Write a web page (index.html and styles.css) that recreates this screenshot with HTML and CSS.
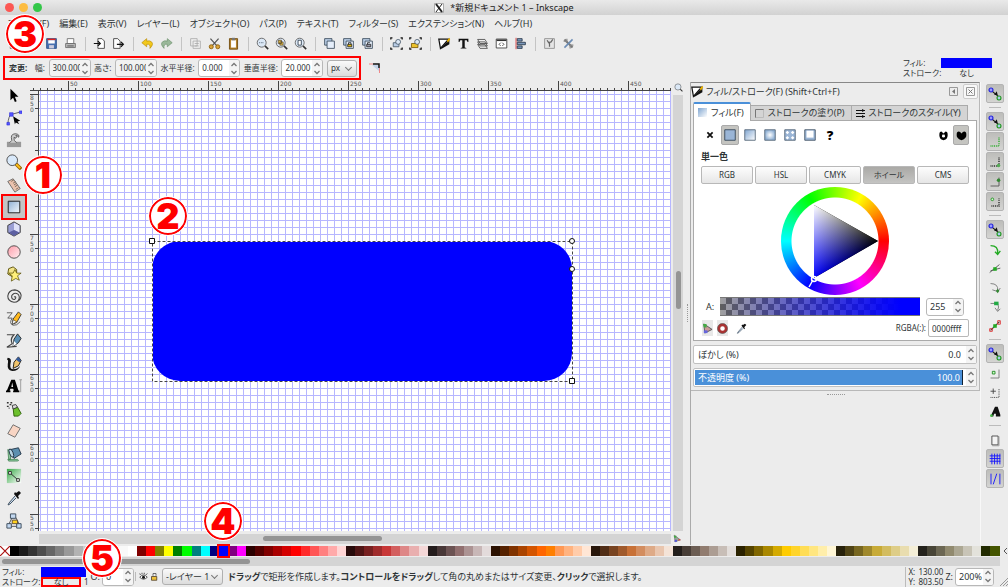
FILE: index.html
```html
<!DOCTYPE html>
<html lang="ja">
<head>
  <meta charset="UTF-8">
  <meta name="viewport" content="width=device-width, initial-scale=1.0">
  <title>*新規ドキュメント 1 - Inkscape</title>
  <link rel="stylesheet" href="styles.css">
</head>
<body>

  <!-- shared icons -->
  <svg class="defs" width="0" height="0" aria-hidden="true">
    <defs>
      <linearGradient id="gBlue" x1="0" y1="0" x2="1" y2="1"><stop offset="0" stop-color="#7fa5d0"/><stop offset="1" stop-color="#fff"/></linearGradient>
      <linearGradient id="gRect" x1="0" y1="0" x2="1" y2="1"><stop offset="0" stop-color="#8fb0d4"/><stop offset="1" stop-color="#f4f8fc"/></linearGradient>
      <linearGradient id="gPink" x1="0" y1="0" x2="1" y2="1"><stop offset="0" stop-color="#ff9aa8"/><stop offset="1" stop-color="#fff0f2"/></linearGradient>
      <linearGradient id="gGreen" x1="0" y1="0" x2="1" y2="1"><stop offset="0" stop-color="#35a845"/><stop offset="1" stop-color="#fff"/></linearGradient>
      <radialGradient id="gRadial"><stop offset="0" stop-color="#fff"/><stop offset="1" stop-color="#8fb0d4"/></radialGradient>
      <linearGradient id="gShade" gradientUnits="userSpaceOnUse" x1="33" y1="0" x2="97" y2="0"><stop offset="0" stop-color="#00f"/><stop offset="1" stop-color="#000"/></linearGradient>
      <linearGradient id="gLight" gradientUnits="userSpaceOnUse" x1="33" y1="18" x2="65" y2="73"><stop offset="0" stop-color="#ff0"/><stop offset="1" stop-color="#000"/></linearGradient>
      <symbol id="up" viewBox="0 0 8 5"><path d="M1.5 4 4 1.500 6.500 4" fill="none" stroke="currentColor" stroke-width="1.300"/></symbol>
      <symbol id="down" viewBox="0 0 8 5"><path d="M1.500 1 4 3.500 6.500 1" fill="none" stroke="currentColor" stroke-width="1.300"/></symbol>
      <symbol id="brush" viewBox="0 0 16 16"><path d="M1 2.500h12L3 14z" fill="#fff" stroke="#111" stroke-width="1.500"/><path d="M14 3v6L5 14l-3 1z" fill="#111"/><path d="m11 4 3-3 1 2-3 4z" fill="#e8b000"/></symbol>
      <symbol id="picker" viewBox="0 0 16 16"><path d="M9 6 3 13l-1 2 2-1 6-6" fill="#cde" stroke="#456" /><path d="m8 4 4 5 1-1-1-2 3-3-2-2-3 2-1-1z" fill="#111"/></symbol>
      <symbol id="mag" viewBox="0 0 16 16"><path d="m11 11 4 4" stroke="#333" stroke-width="2"/><circle cx="7" cy="7" r="5.500" fill="#dbe8f6" stroke="#555"/></symbol>
      <symbol id="snap" viewBox="0 0 18 18"><path d="m6 6 7 6" stroke="#111" stroke-width="1.200"/><path d="m8 10 4 0-1-4z" fill="#111"/><circle cx="4.500" cy="4.500" r="2.200" fill="#99f" stroke="#22d" stroke-width="1.300"/><circle cx="13.500" cy="13.500" r="2.200" fill="#ace" stroke="#292" stroke-width="1.300"/></symbol>
      <symbol id="copies" viewBox="0 0 16 16"><path d="M2 2h9v8H2z" fill="#b9cde6" stroke="#345"/><path d="M5 5h9v9H5z" fill="#e5eefa" stroke="#345"/></symbol>
    </defs>
  </svg>

  <header class="titlebar">
    <div class="lights"><i class="red"></i><i class="yellow"></i><i class="green"></i></div>
    <span class="title"><svg width="10" height="10" viewBox="0 0 10 10"><path d="M.5.5h9v9h-9z" fill="#fff" stroke="#aaa"/><path d="m2 1 6 8" stroke="#222" stroke-width="2"/><path d="M8 1 2 9" stroke="#222"/></svg>*新規ドキュメント 1 – Inkscape</span>
  </header>

  <nav class="menubar">
    <button>ファイル(F)</button>
    <button>編集(E)</button>
    <button>表示(V)</button>
    <button>レイヤー(L)</button>
    <button>オブジェクト(O)</button>
    <button>パス(P)</button>
    <button>テキスト(T)</button>
    <button>フィルター(S)</button>
    <button>エクステンション(N)</button>
    <button>ヘルプ(H)</button>
  </nav>

  <div class="commands">
    <button aria-label="新規"><svg viewBox="0 0 16 16"><path d="M4 2h8v12H4z" fill="#fff" stroke="#555"/></svg></button>
    <button aria-label="開く"><svg viewBox="0 0 16 16"><path d="M2 5h5l1 2h6v7H2z" fill="#ddd" stroke="#555"/></svg></button>
    <button aria-label="保存"><svg viewBox="0 0 16 16"><path d="M2 2h12v12H2z" fill="#4670b0" stroke="#234a86"/><path d="M3 2h10v2H3z" fill="#d22"/><path d="M4 4h8v4H4z" fill="#fff"/><path d="M5 10h6v4H5z" fill="#ccd"/></svg></button>
    <button aria-label="印刷"><svg viewBox="0 0 16 16"><path d="M4 2h8v6H4z" fill="#fff" stroke="#666"/><path d="M2 8h12v5H2z" fill="#bbb" stroke="#666"/><path d="M4 11h8" stroke="#444"/></svg></button>
    <span class="sep"></span>
    <button aria-label="インポート"><svg viewBox="0 0 16 16"><path d="M6 2h5l3 3v9H6z" fill="#fff" stroke="#333"/><path d="M1 8h7M6 5l3 3-3 3" fill="none" stroke="#111" stroke-width="1.500"/></svg></button>
    <button aria-label="エクスポート"><svg viewBox="0 0 16 16"><path d="M2 2h5l3 3v9H2z" fill="#fff" stroke="#333"/><path d="M6 9h8m-3-3 3 3-3 3" fill="none" stroke="#111" stroke-width="1.500"/></svg></button>
    <span class="sep"></span>
    <button aria-label="元に戻す"><svg viewBox="0 0 16 16"><path d="m7 2-6 5 6 5V9q5-1 4 5 5-5 2-8-2-2-6-1z" fill="#f2c81c" stroke="#b88a00" stroke-width=".8"/></svg></button>
    <button aria-label="やり直し"><svg viewBox="0 0 16 16"><path d="m9 2 6 5-6 5V9Q4 8 5 14 0 9 3 6q2-2 6-1z" fill="#9ab89a" stroke="#6a906a" stroke-width=".8"/></svg></button>
    <span class="sep"></span>
    <button aria-label="コピー"><svg viewBox="0 0 16 16"><path d="M2 2h8v9H2zM5 5h9v9H5z" fill="#eee" stroke="#aaa"/><path d="M7 8h5m-5 3h5" stroke="#aaa"/></svg></button>
    <button aria-label="切り取り"><svg viewBox="0 0 16 16"><path d="m3 2 8 9m2-9-8 9" stroke="#555" stroke-width="1.500"/><circle cx="4" cy="12" r="2.500" fill="#d9a33a" stroke="#8a5a00"/><circle cx="12" cy="12" r="2.500" fill="#d9a33a" stroke="#8a5a00"/></svg></button>
    <button aria-label="貼り付け"><svg viewBox="0 0 16 16"><path d="M3 2h10v13H3z" fill="#b5832c" stroke="#6a4200"/><path d="M5 4h6v9H5z" fill="#fff"/><path d="M6 1h4v3H6z" fill="#777"/></svg></button>
    <span class="sep"></span>
    <button aria-label="選択ズーム"><svg viewBox="0 0 16 16"><use href="#mag"/><path d="M4 7h6" stroke="#345" stroke-dasharray="1 1"/></svg></button>
    <button aria-label="描画ズーム"><svg viewBox="0 0 16 16"><use href="#mag"/><path d="M4 4h4v4H4zM6 6h4v4H6z" fill="#e6c34a" stroke="#432" stroke-width=".8"/></svg></button>
    <button aria-label="ページズーム"><svg viewBox="0 0 16 16"><use href="#mag"/><path d="M5 4h4v6H5z" fill="#fff" stroke="#234"/></svg></button>
    <span class="sep"></span>
    <button aria-label="複製"><svg viewBox="0 0 16 16"><use href="#copies"/></svg></button>
    <button aria-label="クローン"><svg viewBox="0 0 16 16"><use href="#copies"/><path d="M7 9h5v3H7z" fill="#e6b800" stroke="#222"/><path d="M8 9V7h3v2" fill="none" stroke="#222"/></svg></button>
    <button aria-label="クローン解除"><svg viewBox="0 0 16 16"><use href="#copies"/><path d="M7 9h5v3H7z" fill="#99a" stroke="#222"/><path d="M8 9V7h3" fill="none" stroke="#222"/></svg></button>
    <span class="sep"></span>
    <button aria-label="グループ化"><svg viewBox="0 0 16 16"><path d="M4 7h7v5H4z" fill="#b9cde6" stroke="#456"/><circle cx="10" cy="6" r="3" fill="#dce8f6" stroke="#456"/><path d="M1 3V1h2M13 1h2v2M1 13v2h2m10 0h2v-2" fill="none" stroke="#111" stroke-width="1.500"/></svg></button>
    <button aria-label="グループ解除"><svg viewBox="0 0 16 16"><path d="M3 8h8v5H3z" fill="#ebc22d" stroke="#765500"/><circle cx="10" cy="6" r="3" fill="#dce8f6" stroke="#456"/><path d="M1 3V1h2M13 1h2v2M1 13v2h2m10 0h2v-2" fill="none" stroke="#111" stroke-width="1.500"/></svg></button>
    <span class="sep"></span>
    <button aria-label="フィル/ストローク"><svg viewBox="0 0 16 16"><use href="#brush"/></svg></button>
    <button aria-label="テキスト"><svg viewBox="0 0 16 16"><path d="M2 2h12v4h-1l-1-2H9.500v9l2 .5V14h-7v-.5l2-.5V4H4L3 6H2z" fill="#111"/></svg></button>
    <button aria-label="レイヤー"><svg viewBox="0 0 16 16"><path d="M2 9h9l3 5H5zM2 6h9l3 5H5zM2 3h9l3 5H5z" fill="#eee" stroke="#444"/></svg></button>
    <button aria-label="XML"><svg viewBox="0 0 16 16"><path d="M1.500 2.500h13v11h-13z" fill="#fff" stroke="#333"/><path d="M2 4h12" stroke="#333" stroke-width="2"/><path d="M7 7 5 9l2 2m2-4 2 2-2 2" fill="none" stroke="#333"/></svg></button>
    <button aria-label="整列"><svg viewBox="0 0 16 16"><path d="M2.500 1v14" stroke="#d22"/><path d="M4 2h6v3H4zM4 6.500h10v3H4zM4 11h6v3H4z" fill="#7d99bd" stroke="#234"/></svg></button>
    <span class="sep"></span>
    <button aria-label="設定"><svg viewBox="0 0 16 16"><path d="M2 2h12v12H2z" fill="#e5e5e5" stroke="#888"/><path d="m5 4 2 3 3-1 2-3m-4 4v5" fill="none" stroke="#666" stroke-width="1.500"/></svg></button>
    <button aria-label="ドキュメント設定"><svg viewBox="0 0 16 16"><path d="m3 3 10 10" stroke="#777" stroke-width="2.500"/><path d="M13 3 3 13" stroke="#6b8cb5" stroke-width="2"/><path d="M2 5h4V2m4 12v-4h4" fill="none" stroke="#888" stroke-width="1.500"/></svg></button>
  </div>

  <div class="options">
    <div class="options-marked">
      <b class="mode">変更:</b>
      <label for="w">幅:</label>
      <span class="spin"><input id="w" value="300.000"><span class="arrows"><button aria-label="増"><svg><use href="#up"/></svg></button><button aria-label="減"><svg><use href="#down"/></svg></button></span></span>
      <label for="h">高さ:</label>
      <span class="spin"><input id="h" value="100.000"><span class="arrows"><button aria-label="増"><svg><use href="#up"/></svg></button><button aria-label="減"><svg><use href="#down"/></svg></button></span></span>
      <label for="rx">水平半径:</label>
      <span class="spin white"><input id="rx" value="0.000"><span class="arrows"><button aria-label="増"><svg><use href="#up"/></svg></button><button aria-label="減"><svg><use href="#down"/></svg></button></span></span>
      <label for="ry">垂直半径:</label>
      <span class="spin white"><input id="ry" value="20.000"><span class="arrows"><button aria-label="増"><svg><use href="#up"/></svg></button><button aria-label="減"><svg><use href="#down"/></svg></button></span></span>
      <span class="drop"><select aria-label="単位"><option>px</option></select></span>
    </div>
    <button class="corner" aria-label="角を尖らせる"><svg width="12" height="10" viewBox="0 0 12 10"><path d="M3 2h7v6z" fill="#c3d3e8"/><path d="M0 1h4" stroke="#e88"/><path d="M4 1h6v4" fill="none" stroke="#111" stroke-width="1.500"/><path d="M10.500 5v5" stroke="#e88"/></svg></button>
    <dl class="style-now">
      <dt>フィル:</dt><dd class="chip"></dd>
      <dt>ストローク:</dt><dd>なし</dd>
    </dl>
  </div>

  <main class="work">
    <div class="toolbox">
      <button aria-label="選択"><svg viewBox="0 0 18 18"><path d="m5 2 9 9-4 0 2 5-2 1-2-5-3 3z" fill="#000"/></svg></button>
      <button aria-label="ノード"><svg viewBox="0 0 18 18"><path d="M2 16Q3 6 6 5l11-3" fill="none" stroke="#555"/><path d="M4 3h4v4H4zM15 1h3v3h-3zM1 14h3v3H1z" fill="#55f" stroke="#22d" stroke-width=".6"/><path d="m8 7 8 5-3 1 2 3-4-2-1 2z" fill="#000"/></svg></button>
      <button aria-label="微調整"><svg viewBox="0 0 18 18"><path d="M1 11h16v6H1z" fill="#999"/><path d="M4 12q4-2 2-6 0-4 5-4 5 1 3 4-1-3-3-2 2 1 0 3l-2-1q-1 4 3 6" fill="#ccc" stroke="#555"/></svg></button>
      <button aria-label="ズーム"><svg viewBox="0 0 18 18"><path d="m11 11 6 6" stroke="#9a6400" stroke-width="4"/><path d="m11 11 5 5" stroke="#ffc21c" stroke-width="2"/><circle cx="7" cy="7" r="6" fill="#d9e9fa" stroke="#444"/></svg></button>
      <button aria-label="測定"><svg viewBox="0 0 18 18"><path d="m2 5 6-3 8 11-6 4z" fill="#ecc3ae" stroke="#666"/><path d="m9 3-3 2m5 0-3 2m4 0-3 2m4 0-3 2m4 1-3 2" stroke="#765"/></svg></button>
      <button class="on" aria-label="矩形"><svg viewBox="0 0 18 18"><path d="M2.500 2.500h13v13h-13z" fill="url(#gRect)" stroke="#111"/></svg></button>
      <button aria-label="3D ボックス"><svg viewBox="0 0 18 18"><path d="m2 5 7-4 7 4v8l-7 4-7-4z" fill="#9a9ed4" stroke="#333"/><path d="m9 2 6 3v8l-6-3z" fill="#dfe1f8"/><path d="m3 13 6-3 6 3-6 4z" fill="#5c5fa2"/></svg></button>
      <button aria-label="円/弧"><svg viewBox="0 0 18 18"><circle cx="9" cy="9" r="7" fill="url(#gPink)" stroke="#444"/></svg></button>
      <button aria-label="星形"><svg viewBox="0 0 18 18"><path d="M3 3 8 1l4 3 0 5-5 3-5-3z" fill="#f3e48a" stroke="#554a00"/><path d="m10 4 2 4 5 0-4 3 2 5-4-2-5 3 1-6-4-3 5 0z" fill="#fff07a" stroke="#554a00" stroke-width=".8"/></svg></button>
      <button aria-label="らせん"><svg viewBox="0 0 18 18"><path d="M9 9q2-1 2 1-1 3-4 1-2-4 2-6 5-1 6 4 0 6-6 6-7-1-7-7 1-7 8-7 6 1 7 6 0 3-2 6" fill="none" stroke="#444" stroke-width="1.200"/></svg></button>
      <button aria-label="鉛筆"><svg viewBox="0 0 18 18"><path d="M1 2h6L2 8h5q-4 6 1 8 4 1 8-4" fill="none" stroke="#555"/><path d="m14 1 3 3-5 9-5 2 1-6z" fill="#ffb81c" stroke="#333"/><path d="m8 10 4 2-5 3z" fill="#fff" stroke="#333" stroke-width=".6"/></svg></button>
      <button aria-label="ペン"><svg viewBox="0 0 18 18"><path d="M1 2h8Q4 7 7 12l-6 4 11-1" fill="none" stroke="#444" stroke-width="1.300"/><path d="m13 1 4 5-3 5-6 4 1-8z" fill="#5a8fb4" stroke="#222"/><path d="m9 9 3 3-4 3z" fill="#fff"/></svg></button>
      <button aria-label="カリグラフィ"><svg viewBox="0 0 18 18"><path d="M2 2q5 0 3 7-1 6 3 6 5 0 8-4-2 6-9 6-6-1-5-8 1-5-1-5z" fill="#111"/><path d="m14 1 3 4-3 6-6 3 1-7z" fill="#f1c46c" stroke="#111"/><path d="m14 1 3 4-2 2-4-3z" fill="#345a9a"/></svg></button>
      <button aria-label="テキスト"><svg viewBox="0 0 18 18"><path d="m6 2 4 0 4 12h1v2H8v-2h1l-1-2H5l-1 2h1v2H0v-2h1zM7 5l-1 5h2z" fill="#000" fill-rule="evenodd"/><path d="M15 2h3m-1.500 0v14" stroke="#999"/></svg></button>
      <button aria-label="スプレー"><svg viewBox="0 0 18 18"><path d="m8 8 5-1 4 7-3 3H9z" fill="#6cc02c" stroke="#285a00"/><path d="m7 5 4-1 2 3-5 2z" fill="#ddd" stroke="#333"/><path d="M1 2h2m1 2h2M1 6h2m2-4h2M3 8h1" stroke="#333" stroke-width="1.500"/></svg></button>
      <button aria-label="消しゴム"><svg viewBox="0 0 18 18"><path d="m8 2 8 4-6 10-8-4z" fill="#f8d5c4" stroke="#666"/></svg></button>
      <button aria-label="バケツ"><svg viewBox="0 0 18 18"><path d="M2 15h11q3 2-2 2H3zM2 4q4 0 3 11H3z" fill="#8ac79a" stroke="#3a7a4a" stroke-width=".8"/><path d="m5 4 9-2 3 7-8 5z" fill="#5c8fb0" stroke="#234"/><ellipse cx="6" cy="8" rx="2" ry="5" fill="#b5d3e3" stroke="#234" transform="rotate(-22 6 8)"/></svg></button>
      <button aria-label="グラデーション"><svg viewBox="0 0 18 18"><path d="M1 1h16v16H1z" fill="url(#gGreen)"/><path d="m5 6 8 7" stroke="#222"/><path d="M3 4h3v3H3zM12 12h3v3h-3z" fill="#fff" stroke="#222"/></svg></button>
      <button aria-label="スポイト"><svg viewBox="0 0 16 16"><use href="#picker"/></svg></button>
      <button aria-label="コネクタ"><svg viewBox="0 0 18 18"><path d="m7 5-4 8m8-8 4 8M6 15h6" stroke="#444"/><path d="M5 1h6v5H5zM1 12h5v5H1zM12 12h5v5h-5z" fill="#c3d8f0" stroke="#345"/><path d="M7 8h6v4H7z" fill="#ffd21c" stroke="#543"/></svg></button>
    </div>

    <section class="editor">
      <div class="ruler-h" id="rulerH"></div>
      <svg class="corner-zoom" viewBox="0 0 16 16"><use href="#mag"/></svg>
      <div class="ruler-v" id="rulerV"></div>
      <div class="canvas">
        <svg class="drawing" width="434" height="152" viewBox="0 0 434 152">
          <rect x="6" y="6" width="420" height="140" rx="28" fill="#00f"/>
          <rect x="6.500" y="6.500" width="420" height="140" fill="none" stroke="#fff"/>
          <rect x="6.500" y="6.500" width="420" height="140" fill="none" stroke="#444" stroke-dasharray="3 2"/>
          <g fill="#fff" stroke="#111">
            <path d="M3.500 3.500h5v5h-5zM423.500 143.500h5v5h-5z"/>
            <circle cx="426" cy="6" r="2.500"/><circle cx="426" cy="34" r="2.500"/>
          </g>
        </svg>
      </div>
      <div class="scroll-v"><i></i></div>
      <div class="scroll-h"><i></i></div>
      <svg class="corner-cms" viewBox="0 0 12 12"><path d="m2 1 9 7-8 3z" fill="#9a9" stroke="#666"/><path d="M1 2h4v3H2z" fill="#4a4"/><path d="M3 8h3v3H2z" fill="#55d"/><path d="M8 7h3v2H8z" fill="#d44"/></svg>
    </section>

    <div class="handle-v"><i></i></div>

    <aside class="dock">
      <div class="dialog">
        <div class="dialog-head">
          <svg width="13" height="13"><use href="#brush"/></svg>
          <h2>フィル/ストローク(F) (Shift+Ctrl+F)</h2>
          <button aria-label="アイコン化"><svg width="9" height="9" viewBox="0 0 9 9"><path d="M.5.5h8v8h-8z" fill="none" stroke="#999"/><path d="M6 2v5L3 4.500z" fill="#777"/></svg></button>
          <button class="close" aria-label="閉じる"><svg width="9" height="9" viewBox="0 0 9 9"><path d="M.5.5h8v8h-8z" fill="none" stroke="#999"/><path d="m2.500 2.500 4 4m0-4-4 4" stroke="#777"/></svg></button>
        </div>
        <div class="tabs">
          <button class="active"><svg width="9" height="9"><path d="M0 0h9v9H0z" fill="url(#gBlue)"/></svg>フィル(F)</button>
          <button><svg width="9" height="9"><path d="M.5 9V.5H9" fill="none" stroke="#777"/><path d="M.5 8.500h8v-8" fill="none" stroke="#bbb"/></svg>ストロークの塗り(P)</button>
          <button><svg width="9" height="9"><path d="M0 1.500h9M0 4.500h9M0 7.500h9" stroke="#111"/><path d="m6 0 3 1.500L6 3m0 3 3 1.500L6 9" fill="#111"/></svg>ストロークのスタイル(Y)</button>
        </div>
        <div class="panel">
          <div class="paints">
            <button aria-label="塗りなし"><svg viewBox="0 0 16 16"><path d="m5 5 6 6m0-6-6 6" stroke="#111" stroke-width="2"/></svg></button>
            <button class="on" aria-label="単一色"><svg viewBox="0 0 16 16"><path d="M2 2h12v12H2z" fill="#9ab5d6" stroke="#345"/></svg></button>
            <button aria-label="線形"><svg viewBox="0 0 16 16"><path d="M2 2h12v12H2z" fill="url(#gBlue)" stroke="#567"/></svg></button>
            <button aria-label="放射"><svg viewBox="0 0 16 16"><path d="M2 2h12v12H2z" fill="url(#gRadial)" stroke="#567"/></svg></button>
            <button aria-label="パターン"><svg viewBox="0 0 16 16"><path d="M2 2h12v12H2z" fill="#9ab5d6" stroke="#567"/><path d="m5 3 2 2-2 2-2-2zm6 0 2 2-2 2-2-2zm-6 6 2 2-2 2-2-2zm6 0 2 2-2 2-2-2z" fill="#fff"/></svg></button>
            <button aria-label="スウォッチ"><svg viewBox="0 0 16 16"><path d="M2 2h12v12H2z" fill="#9ab5d6" stroke="#456"/><path d="M4 3h8v8H4z" fill="#fff"/></svg></button>
            <button class="ask" aria-label="未設定">?</button>
            <span class="grow"></span>
            <button class="rule" aria-label="塗り規則 交互"><svg viewBox="0 0 16 16"><path d="M8 15Q1 13 2 6q0-4 3-4l3 3 3-3q3 0 3 4 1 7-6 9zM7 6q-3 4 1 5 4-1 1-5L8 7z" fill="#000" fill-rule="evenodd"/></svg></button>
            <button class="rule on" aria-label="塗り規則 全部"><svg viewBox="0 0 16 16"><path d="M8 15Q0 12 1 6q0-4 3-4 2 0 4 3 2-3 4-3 3 0 3 4 1 6-7 9z" fill="#000"/></svg></button>
          </div>
          <h3>単一色</h3>
          <div class="modes">
            <button>RGB</button><button>HSL</button><button>CMYK</button><button class="on">ホイール</button><button>CMS</button>
          </div>
          <div class="wheel">
            <svg width="108" height="108" viewBox="0 0 108 108">
              <g class="tri"><path d="M33 18 97 54 33 91z" fill="url(#gShade)"/><path class="add" d="M33 18 97 54 33 91z" fill="url(#gLight)"/></g>
              <path d="m28 100 4-7" stroke="#fff" stroke-width="1.500"/><circle cx="33" cy="92" r="2.500" fill="none" stroke="#fff" stroke-width="1.500"/>
            </svg>
          </div>
          <div class="alpha">
            <label for="alpha">A:</label>
            <span class="alpha-bar"></span>
            <span class="spin white wide"><input id="alpha" value="255"><span class="arrows"><button aria-label="増"><svg><use href="#up"/></svg></button><button aria-label="減"><svg><use href="#down"/></svg></button></span></span>
          </div>
          <div class="rgba">
            <button class="tint" aria-label="色管理"><svg viewBox="0 0 12 12"><path d="m2 1 9 6-8 4z" fill="#c99" stroke="#555"/><path d="M1 1h4v4H2z" fill="#4a4"/><path d="M2 8h4v3H2z" fill="#66d"/></svg></button>
            <button class="tint" aria-label="色域外"><svg viewBox="0 0 12 12"><circle cx="6" cy="6" r="4" fill="#fff" stroke="#a33" stroke-width="3"/><circle cx="6" cy="6" r="5.500" fill="none" stroke="#444" stroke-width=".6"/></svg></button>
            <button class="pick" aria-label="色を拾う"><svg viewBox="0 0 16 16"><use href="#picker"/></svg></button>
            <span class="grow"></span>
            <label for="rgba">RGBA(:):</label>
            <input id="rgba" value="0000ffff">
          </div>
        </div>
        <div class="meter">
          <label class="track" for="blur">ぼかし (%)</label><input id="blur" value="0.0">
          <span class="arrows"><button aria-label="増"><svg><use href="#up"/></svg></button><button aria-label="減"><svg><use href="#down"/></svg></button></span>
        </div>
        <div class="meter full">
          <label class="track" for="opacity">不透明度 (%)</label><input id="opacity" value="100.0">
          <span class="arrows"><button aria-label="増"><svg><use href="#up"/></svg></button><button aria-label="減"><svg><use href="#down"/></svg></button></span>
        </div>
      </div>
      <div class="handle-h"></div>
    </aside>

    <div class="snapbar">
      <button class="on" aria-label="スナップ"><svg><use href="#snap"/></svg></button>
      <hr>
      <button class="on" aria-label="境界枠"><svg><use href="#snap"/></svg></button>
      <button class="on" aria-label="境界枠の辺"><svg viewBox="0 0 18 18"><path d="M4 13.500h9.500V4" fill="none" stroke="#2a2" stroke-width="1.500" stroke-dasharray="1 1"/></svg></button>
      <button class="on" aria-label="境界枠の角"><svg viewBox="0 0 18 18"><path d="M4 13.500h9.500V4" fill="none" stroke="#222" stroke-width="1.500" stroke-dasharray="1 1"/><circle cx="13" cy="13" r="2" fill="#5a5"/></svg></button>
      <button class="on" aria-label="辺の中点"><svg viewBox="0 0 18 18"><path d="M4 13.500h9.500V4" fill="none" stroke="#555"/><circle cx="13" cy="7" r="2" fill="#383"/></svg></button>
      <button class="on" aria-label="枠の中心"><svg viewBox="0 0 18 18"><path d="M5 13.500h8.500V5" fill="none" stroke="#222" stroke-width="1.500" stroke-dasharray="1 1"/><circle cx="6" cy="6" r="1.500" fill="#cfc" stroke="#282"/></svg></button>
      <hr>
      <button class="on" aria-label="ノードスナップ"><svg><use href="#snap"/></svg></button>
      <button aria-label="パス"><svg viewBox="0 0 18 18"><path d="M4 4q9 0 8 9M9 11l3 3 3-4" fill="none" stroke="#2a2" stroke-width="1.500"/></svg></button>
      <button aria-label="交差点"><svg viewBox="0 0 18 18"><path d="M3 13 14 4M4 11l11-3" stroke="#555"/><path d="M7 7h4v4H7z" fill="#2a2"/></svg></button>
      <button aria-label="シャープノード"><svg viewBox="0 0 18 18"><path d="M4 4q9 0 8 8m-6-1 6 2 3-4" fill="none" stroke="#777"/><path d="m12 10 2 2-2 3-2-3z" fill="#383"/></svg></button>
      <button aria-label="スムーズノード"><svg viewBox="0 0 18 18"><path d="M4 5h8q2 4 0 8m-3-3 3 4 3-3" fill="none" stroke="#777"/><path d="M8 3h5v4H8z" fill="#2a4"/></svg></button>
      <button aria-label="線の中点"><svg viewBox="0 0 18 18"><path d="m4 14 10-10" stroke="#333" stroke-width="1.200"/><path d="M3 12h3v3H3zM12 3h3v4h-3z" fill="none" stroke="#d33"/><path d="M7 7h4v4H7z" fill="#2a2"/></svg></button>
      <hr>
      <button class="on" aria-label="その他"><svg><use href="#snap"/></svg></button>
      <button aria-label="中心"><svg viewBox="0 0 18 18"><path d="M4 13.500h9.500V4" fill="none" stroke="#777"/><path d="M6 6h3v3H6z" fill="#cfc" stroke="#282"/></svg></button>
      <button aria-label="回転中心"><svg viewBox="0 0 18 18"><path d="M4 14h9.500V4" fill="none" stroke="#333" stroke-dasharray="1 1"/><path d="M7 4v6M4 7h6" stroke="#444"/></svg></button>
      <button aria-label="ベースライン"><svg viewBox="0 0 18 18"><path d="m9 3 3 0 3 9v2h-5v-3H8l-1 3H4z" fill="#111"/><circle cx="5" cy="13" r="1.500" fill="#4b4"/></svg></button>
      <hr>
      <button aria-label="ページ境界"><svg viewBox="0 0 18 18"><path d="M5.500 4.500h7v10h-7z" fill="#f4f4f4" stroke="#444"/><path d="M13.500 5v10.500H6" fill="none" stroke="#999"/></svg></button>
      <button class="on" aria-label="グリッド"><svg viewBox="0 0 18 18"><path d="M5.500 3v12M8.500 3v12M11.500 3v12M3 5.500h12M3 8.500h12M3 11.500h12M14.500 3v12" stroke="#11f"/></svg></button>
      <button class="on" aria-label="ガイド"><svg viewBox="0 0 18 18"><path d="M4.500 3v12M14.500 3v12M7 15l4-12" stroke="#11f"/></svg></button>
    </div>
  </main>

  <div class="palette">
    <button class="none" aria-label="なし"><svg viewBox="0 0 10 10"><path d="m0 0 10 10M10 0 0 10" stroke="#a11" stroke-width="1.200"/></svg></button>
    <div class="swatches" id="swatches"></div>
    <button class="more" aria-label="パレット"><svg width="5" height="8" viewBox="0 0 5 8"><path d="M4 1 1 4l3 3" fill="none" stroke="#555"/></svg></button>
  </div>
  <div class="palette-scroll"><i></i></div>

  <footer class="status">
    <dl class="style-now small">
      <dt>フィル:</dt><dd class="chip"></dd>
      <dt>ストローク:</dt><dd class="marked">なし</dd>
    </dl>
    <span class="stroke-width">1</span>
    <label for="op">O:</label>
    <span class="spin white op"><input id="op" value="0"><span class="arrows"><button aria-label="増"><svg><use href="#up"/></svg></button><button aria-label="減"><svg><use href="#down"/></svg></button></span></span>
    <button class="layer-btn" aria-label="表示"><svg viewBox="0 0 12 12"><path d="M1 7q5-6 10 0-5 5-10 0z" fill="#fff" stroke="#222"/><circle cx="6" cy="7" r="2" fill="#111"/><path d="m2 4-1-2m3 1V1m3 2V1m2 3 2-2" stroke="#222"/></svg></button>
    <button class="layer-btn" aria-label="ロック"><svg viewBox="0 0 12 12"><path d="M4 5V2h4v3" fill="none" stroke="#444"/><path d="M2 6h7v5H2z" fill="#ecc03a" stroke="#432"/></svg></button>
    <span class="drop layer"><select aria-label="レイヤー"><option>‐レイヤー 1</option></select></span>
    <p class="hint"><b>ドラッグ</b>で矩形を作成します。<b>コントロールをドラッグ</b>して角の丸めまたはサイズ変更、<b>クリック</b>で選択します。</p>
    <div class="coords"><span>X:</span><span>130.00</span><span>Y:</span><span>803.50</span></div>
    <label for="zoom">Z:</label>
    <span class="spin white zoom"><input id="zoom" value="200%"><span class="arrows"><button aria-label="増"><svg><use href="#up"/></svg></button><button aria-label="減"><svg><use href="#down"/></svg></button></span></span>
    <svg class="grip" viewBox="0 0 9 9"><path d="M1 9 9 1M4 9l5-5M7 9l2-2" stroke="#999"/></svg>
  </footer>

  <!-- numbered notes over the window -->
  <span class="note n1">1</span>
  <span class="note n2">2</span>
  <span class="note n3">3</span>
  <span class="note n4">4</span>
  <span class="note n5">5</span>

<script src="script.js"></script>
</body>
</html>
```
FILE: styles.css
```css
* {
  box-sizing: border-box;
}
body {
  margin: 0;
  min-height: 100vh;
  display: flex;
  flex-direction: column;
  position: relative;
  overflow: hidden;
  background: #ececec;
  color: #2e3436;
  font: 9px/12px "Noto Sans", "Noto Sans CJK JP", sans-serif;
  font-feature-settings: "palt";
}
button, input, select {
  font: inherit;
  font-feature-settings: inherit;
  color: inherit;
  margin: 0;
  padding: 0;
  border: 0;
  background: none;
}
svg {
  display: block;
  flex: none;
}
.defs {
  position: absolute;
}
h2, h3, p, dl, dd {
  margin: 0;
  font-size: 9px;
  font-weight: normal;
}
.grow {
  flex: 1;
}

/* title and menus */
.titlebar {
  height: 15px;
  display: grid;
  grid-template-columns: 1fr auto 1fr;
  align-items: center;
  background: linear-gradient(#e9e9e9, #d2d2d2);
  color: #222;
}
.lights {
  display: flex;
  gap: 5px;
  padding-left: 5px;
}
.lights i {
  width: 9px;
  height: 9px;
  border-radius: 50%;
}
.red { background: #fc5753; }
.yellow { background: #fdbc40; }
.green { background: #33c748; }
.title {
  display: flex;
  align-items: center;
  gap: 6px;
}
.menubar {
  height: 17px;
  display: flex;
  align-items: center;
  gap: 10px;
  padding-left: 8px;
}
.commands {
  height: 23px;
  display: flex;
  align-items: center;
  padding-left: 4px;
}
.commands button {
  width: 19px;
}
.commands button svg {
  width: 13px;
  height: 13px;
  margin: auto;
}
.sep {
  width: 10px;
  height: 14px;
  background: linear-gradient(#c4c4c4, #c4c4c4) center / 1px 100% no-repeat;
}

/* tool options */
.options {
  height: 26px;
  display: flex;
  align-items: flex-start;
  padding-top: 1px;
  font-size: 8px;
}
.options-marked {
  height: 24px;
  width: 358px;
  margin-left: 3px;
  border: 2px solid #f00;
  display: flex;
  align-items: center;
  justify-content: space-between;
  padding: 0 2px 0 4px;
}
.mode {
  margin-right: 4px;
}
.spin {
  display: flex;
  width: 42px;
  height: 18px;
  border: 1px solid #b8b8b8;
  border-radius: 3px;
  background: #f2f2f2;
  overflow: hidden;
}
.spin.white {
  background: #fff;
}
.spin input {
  flex: 1;
  min-width: 0;
  padding-left: 3px;
}
.arrows {
  width: 10px;
  flex: none;
  display: flex;
  flex-direction: column;
  background: #f4f4f4;
  color: #777;
}
.arrows button {
  flex: 1;
}
.arrows svg {
  width: 8px;
  height: 5px;
  margin: auto;
}
.drop {
  position: relative;
  display: flex;
}
.drop select {
  appearance: none;
  width: 30px;
  height: 17px;
  padding-left: 3px;
  border: 1px solid #b0b0b0;
  border-radius: 3px;
  background: linear-gradient(#fafafa, #dcdcdc);
}
.drop::after {
  content: "";
  position: absolute;
  right: 6px;
  top: 5px;
  width: 4px;
  height: 4px;
  border: solid #777;
  border-width: 0 1px 1px 0;
  transform: rotate(45deg);
  pointer-events: none;
}
.corner {
  margin: 7px auto 0 8px;
}
.style-now {
  display: grid;
  grid-template-columns: 38px 51px;
  grid-auto-rows: 10px;
  line-height: 10px;
  font-size: 8px;
  padding: 2px 16px 0 0;
  white-space: nowrap;
}
.style-now dd {
  text-align: center;
  font-size: 8px;
}
.style-now .chip {
  background: #00f;
}

/* work area */
.work {
  flex: 1;
  display: flex;
  min-height: 0;
}
.toolbox {
  width: 30px;
  display: flex;
  flex-direction: column;
  padding: 3px 0 13px;
}
.toolbox button {
  flex: 1;
  min-height: 18px;
  width: 24px;
  margin-left: 2px;
}
.toolbox svg {
  width: 16px;
  height: 16px;
  margin: auto;
}
.toolbox .on {
  flex: 0 0 26px;
  width: 26px;
  margin: -2px 0 -2px 1px;
  border: 2px solid #f00;
  background: #c4c4c4;
}
.editor {
  flex: 1;
  min-width: 0;
  display: grid;
  grid-template: 10px 1fr 14px / 9px 1fr 14px;
}
.ruler-h {
  grid-column: 1 / 3;
  position: relative;
  overflow: hidden;
  border-bottom: 1px solid #444;
  background: repeating-linear-gradient(90deg, #444 0 1px, transparent 1px 7px) 3px 7px / 100% 3px no-repeat;
}
.ruler-v {
  position: relative;
  overflow: hidden;
  border-right: 1px solid #444;
  background: repeating-linear-gradient(#444 0 1px, transparent 1px 14px) 5px 3px / 4px 100% no-repeat;
}
.ruler-h span, .ruler-v span {
  position: absolute;
  font: 6px/6px "DejaVu Sans", sans-serif;
  color: #555;
}
.ruler-h span {
  top: 0;
  height: 10px;
  padding-left: 1px;
  border-left: 1px solid #444;
}
.ruler-v span {
  left: 0;
  width: 9px;
  border-top: 1px solid #444;
  white-space: pre-line;
}
.corner-zoom {
  width: 9px;
  height: 9px;
  margin: 2px 0 0 3px;
}
.canvas {
  position: relative;
  overflow: hidden;
  background:
    repeating-linear-gradient(90deg, transparent 0 1px, #b6b6ff 1px 2px, transparent 2px 7px),
    repeating-linear-gradient(transparent 0 3px, #b6b6ff 3px 4px, transparent 4px 7px),
    #fff;
}
.drawing {
  position: absolute;
  left: 107px;
  top: 144px;
}
.scroll-v {
  width: 10px;
  margin: 4px 0 0 2px;
  display: flex;
  flex-direction: column;
  align-items: center;
  background: #d4d4d4;
}
.scroll-v i {
  width: 5px;
  height: 38px;
  margin-top: 176px;
  border-radius: 3px;
  background: #949494;
}
.scroll-h {
  grid-column: 2;
  height: 10px;
  margin-top: 3px;
  padding: 2px 0 0 224px;
  background: #d4d4d4;
}
.scroll-h i {
  display: block;
  width: 119px;
  height: 5px;
  border-radius: 3px;
  background: #949494;
}
.corner-cms {
  width: 8px;
  height: 9px;
  margin: 3px 0 0 2px;
}
.handle-v {
  width: 5px;
  display: flex;
  align-items: center;
  justify-content: center;
}
.handle-v i {
  height: 18px;
  border-left: 1px dotted #999;
}

/* dock */
.dock {
  width: 291px;
  margin-top: 1px;
  border-left: 1px solid #aaa;
  border-right: 1px solid #f8f8f8;
}
.dialog {
  border: 1px solid #b8b8b8;
  border-top-color: #888;
  border-left: 0;
  padding: 0 2px 3px 2px;
}
.dialog-head {
  height: 17px;
  display: flex;
  align-items: center;
  gap: 2px;
  margin: 0 -1px 0 -2px;
}
.dialog-head h2 {
  flex: 1;
}
.dialog-head button {
  width: 15px;
  height: 15px;
}
.dialog-head button svg {
  margin: auto;
}
.dialog-head .close {
  border: 1px solid #ccc;
  border-radius: 2px;
  background: #f8f8f8;
}
.tabs {
  display: flex;
  align-items: flex-end;
  margin-top: 2px;
}
.tabs button {
  height: 15px;
  display: flex;
  align-items: center;
  gap: 4px;
  padding: 0 6px 0 4px;
  border: 1px solid #aaa;
  border-width: 1px 1px 0 0;
  background: #d4d4d4;
  white-space: nowrap;
}
.tabs .active {
  height: 19px;
  border: 1px solid #aaa;
  border-top: 2px solid #4a90d9;
  border-bottom: 0;
  border-radius: 2px 2px 0 0;
  background: #fff;
  margin-bottom: -1px;
  position: relative;
}
.panel {
  border: 1px solid #aaa;
  background: #fff;
  padding: 4px 7px 3px;
}
.paints {
  display: flex;
  gap: 2px;
}
.paints button {
  width: 18px;
  height: 20px;
  border-radius: 2px;
}
.paints svg {
  width: 14px;
  height: 14px;
  margin: auto;
}
.paints .on {
  border: 1px solid #aaa;
  background: #c4c4c0;
}
.paints .rule {
  width: 16px;
}
.paints .rule svg {
  width: 11px;
  height: 11px;
}
.paints .ask {
  font-weight: 900;
  font-size: 13px;
  color: #000;
}
.panel h3 {
  font-weight: bold;
  margin: 6px 0 3px;
}
.modes {
  display: grid;
  grid-template-columns: repeat(5, 1fr);
  gap: 2px;
  font-size: 8px;
}
.modes button {
  height: 18px;
  border: 1px solid #b8b8b8;
  border-radius: 2px;
  background: linear-gradient(#fdfdfd, #e6e6e6);
}
.modes .on {
  background: linear-gradient(#aaa9a6, #c4c4c2);
}
.wheel {
  position: relative;
  width: 108px;
  height: 108px;
  margin: 3px auto 2px;
  border-radius: 50%;
  background:
    radial-gradient(closest-side, #fff 43px, transparent 44px),
    conic-gradient(from 90deg, red, magenta, blue, cyan, lime, yellow, red);
}
.tri {
  isolation: isolate;
}
.add {
  mix-blend-mode: screen;
}
.alpha {
  display: flex;
  align-items: center;
  gap: 6px;
  padding: 0 5px;
}
.alpha-bar {
  flex: 1;
  height: 19px;
  border: 1px solid #777;
  border-width: 1px 0;
  background:
    linear-gradient(90deg, transparent, #00f 90%),
    repeating-conic-gradient(#5f5f5f 0 25%, #a0a0a0 0 50%) 0 0 / 12px 12px;
}
.spin.wide {
  width: 38px;
  font-size: 9px;
}
.rgba {
  display: flex;
  align-items: center;
  margin-top: 3px;
  font-size: 8px;
}
.rgba button {
  width: 11px;
  height: 16px;
  margin: 0 3px 0 1px;
}
.rgba button svg {
  width: 11px;
  height: 11px;
  margin: auto;
}
.rgba .tint {
  background: #e8e8e8;
}
.rgba .pick {
  margin-left: 5px;
}
.rgba input {
  width: 41px;
  height: 18px;
  margin-left: 2px;
  padding-left: 3px;
  border: 1px solid #b8b8b8;
  border-radius: 2px;
}
.meter {
  display: flex;
  height: 19px;
  margin-top: 4px;
  border: 1px solid #c0c0c0;
  border-radius: 2px;
  background: #fff;
  line-height: 17px;
}
.meter .track {
  flex: 1;
  padding-left: 4px;
}
.meter input {
  width: 50px;
  padding-right: 2px;
  margin-right: 3px;
  text-align: right;
}
.meter.full .track, .meter.full input {
  margin-top: 1px;
  margin-bottom: 1px;
  background: #4a90d9;
  color: #fff;
  line-height: 15px;
}
.meter.full .track {
  margin-left: 1px;
  padding-left: 3px;
}
.meter.full input {
  border-right: 1px solid #123;
}
.handle-h {
  width: 18px;
  margin: 3px auto;
  border-top: 1px dotted #999;
}

/* snap bar */
.snapbar {
  width: 27px;
  padding: 3px 4px 0 5px;
}
.snapbar button {
  display: block;
  width: 18px;
  height: 19px;
}
.snapbar .on {
  margin-bottom: 1px;
  border: 1px solid #b4b4b4;
  border-radius: 2px;
  background: linear-gradient(#bdbdba, #d4d4d2);
}
.snapbar svg {
  width: 16px;
  height: 16px;
  margin: auto;
}
.snapbar hr {
  height: 1px;
  margin: 4px 3px;
  border: 0;
  background: #bbb;
}

/* palette */
.palette {
  display: flex;
  height: 11px;
  margin-top: 1px;
  padding-bottom: 1px;
}
.none {
  width: 10px;
  background: #fff;
}
.none svg {
  width: 10px;
  height: 10px;
}
.swatches {
  flex: 1;
  display: flex;
}
.swatches i {
  flex: 1;
}
.swatches .picked {
  position: relative;
  outline: 2px solid #f00;
}
.more {
  width: 8px;
  padding-left: 3px;
}
.palette-scroll {
  height: 9px;
  margin-right: 8px;
  padding: 2px;
  background: #d4d4d4;
}
.palette-scroll i {
  display: block;
  width: 248px;
  height: 5px;
  border-radius: 3px;
  background: #949494;
}

/* status */
.status {
  display: flex;
  align-items: center;
  height: 21px;
  padding-left: 2px;
}
.style-now.small {
  grid-template-columns: 39px 45px;
  padding: 0;
}
.small .marked {
  width: 40px;
  border: 2px solid #f00;
  line-height: 6px;
}
.stroke-width {
  align-self: flex-end;
  margin-left: -2px;
  font-size: 8px;
  line-height: 10px;
}
.status label {
  margin: 0 2px;
}
.spin.op {
  width: 32px;
}
.layer-btn {
  width: 12px;
}
.op + .layer-btn {
  width: 15px;
  margin-left: 1px;
  padding-left: 3px;
  border-left: 1px solid #bbb;
}
.layer-btn svg {
  width: 9px;
  height: 9px;
}
.drop.layer select {
  width: 61px;
}
.hint {
  flex: 1;
  padding-left: 5px;
  white-space: nowrap;
}
.coords {
  display: grid;
  grid-template-columns: 10px auto;
  font-size: 8px;
  line-height: 10px;
  padding-left: 2px;
  border-left: 1px solid #bbb;
}
.spin.zoom {
  width: 39px;
}
.grip {
  width: 9px;
  height: 9px;
  margin: 10px 0 0 5px;
}

/* notes */
.note {
  position: absolute;
  width: 38px;
  height: 38px;
  border: 2px solid #f00;
  border-radius: 50%;
  outline: 1px solid #fff;
  background: #fff;
  color: #f00;
  font: 900 36px/34px Inter, sans-serif;
  text-align: center;
}
.n1 { left: 24px; top: 156px; }
.n2 { left: 149px; top: 197px; }
.n3 { left: 6px; top: 15px; }
.n4 { left: 204px; top: 502px; }
.n5 { left: 83px; top: 539px; }
```
FILE: script.js
```js
const colors = `
  000000 1a1a1a 333333 4d4d4d 666666 808080 999999 b3b3b3 cccccc e6e6e6 ececec f2f2f2 f9f9f9 ffffff
  800000 ff0000 808000 ffff00 008000 00ff00 008080 00ffff 000080 0000ff 800080 ff00ff
  2b0000 550000 800000 aa0000 d40000 ff0000 ff2a2a ff5555 ff8080 ffaaaa ffd5d5
  280b0b 501616 782121 a02c2c c83737 d35f5f de8787 e9afaf f4d7d7
  241c1c 483737 6c5353 916f6f ac9393 c8b7b7 e3dbdb
  2b1100 552200 803300 aa4400 d45500 ff6600 ff7f00 ff9955 ffb380 ffccaa ffe6d5
  28170b 502d16 784421 a05a2c c87137 d38d5f deaa87 e9c6af f4e3d7
  241f1c 483e37 6c5d53 917c6f ac9d93 c8beb7 e3dedb
  2b2200 554400 806600 aa8800 d4aa00 ffcc00 ffd42a ffdd55 ffe680 ffeeaa fff6d5
  28220b 504416 786721 a0892c c8ab37 d3bc5f decd87 e9ddaf f4eed7
  24221c 484537 6c6753 918a6f aca793 c8c4b7 e3e2db
  222b00 445500`.trim().split(/\s+/);

const swatches = document.getElementById("swatches");
colors.forEach(function (c) {
  const el = document.createElement("i");
  el.style.background = "#" + c;
  if (c === "0000ff") el.className = "picked";
  swatches.appendChild(el);
});

// 50 user units are 70px at this zoom
const rulerH = document.getElementById("rulerH");
for (let i = 1; i < 10; i++) {
  const el = document.createElement("span");
  el.textContent = i * 50;
  el.style.left = (i * 70 - 32) + "px";
  rulerH.appendChild(el);
}

const rulerV = document.getElementById("rulerV");
for (let i = 0; i < 7; i++) {
  const el = document.createElement("span");
  el.textContent = String(850 - i * 50).split("").join("\n");
  el.style.top = (i * 70 + 3) + "px";
  rulerV.appendChild(el);
}
```
